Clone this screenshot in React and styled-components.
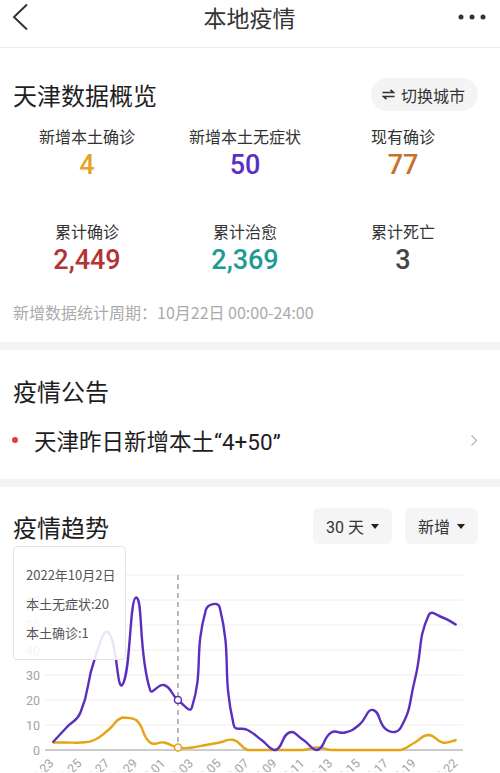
import React from "react";
import styled, { createGlobalStyle } from "styled-components";

const GlobalStyle = createGlobalStyle`
  body {
    margin: 0;
    background: #fff;
    font-family: "Noto Sans CJK SC", "Noto Sans", sans-serif;
    color: #222;
  }
`;

const asymptomatic = [3, 9, 15, 36, 47, 26, 61, 24, 26, 20, 17, 56, 57, 10, 8, 4, 0, 7, 4, 0, 7, 7, 10, 16, 8, 9, 28, 54, 53, 50];
const confirmed = [3, 3, 3, 4, 8, 13, 12, 3, 3, 1, 1, 2, 3, 4, 0, 0, 0, 0, 0, 1, 0, 0, 0, 0, 0, 0, 3, 6, 3, 4];

const stats = [
  { label: "新增本土确诊", value: "4", color: "#e2a52a" },
  { label: "新增本土无症状", value: "50", color: "#5a2fc4" },
  { label: "现有确诊", value: "77", color: "#c8702c" },
  { label: "累计确诊", value: "2,449", color: "#b43333" },
  { label: "累计治愈", value: "2,369", color: "#1d9b96" },
  { label: "累计死亡", value: "3", color: "#454545" },
];

// chart geometry
const X0 = 52.6;
const STEP = 13.93;
const BASE = 206;
const UNIT = 2.5;
const px = (i) => X0 + i * STEP;
const py = (v) => BASE - v * UNIT;

function dateLabel(i) {
  const d = new Date(2022, 8, 23 + i);
  const mm = String(d.getMonth() + 1).padStart(2, "0");
  const dd = String(d.getDate()).padStart(2, "0");
  return `${mm}-${dd}`;
}

function smoothPath(values, smooth = 0.5) {
  const pts = values.map((v, i) => [px(i), py(v)]);
  const ys = pts.map((p) => p[1]);
  const minY = Math.min(...ys);
  const maxY = Math.max(...ys);
  const clamp = (y) => Math.min(maxY, Math.max(minY, y));
  const cps = pts.map((p, i) => {
    const prev = pts[i - 1] || p;
    const next = pts[i + 1] || p;
    const vx = next[0] - prev[0];
    const vy = next[1] - prev[1];
    let d0 = Math.hypot(p[0] - prev[0], p[1] - prev[1]);
    let d1 = Math.hypot(next[0] - p[0], next[1] - p[1]);
    const sum = d0 + d1;
    if (sum) {
      d0 /= sum;
      d1 /= sum;
    }
    return {
      in: [p[0] - vx * smooth * d0, clamp(p[1] - vy * smooth * d0)],
      out: [p[0] + vx * smooth * d1, clamp(p[1] + vy * smooth * d1)],
    };
  });
  let d = `M${pts[0][0]},${pts[0][1]}`;
  for (let i = 1; i < pts.length; i++) {
    const a = cps[i - 1].out;
    const b = cps[i].in;
    d += ` C${a[0]},${a[1]} ${b[0]},${b[1]} ${pts[i][0]},${pts[i][1]}`;
  }
  return d;
}

const Page = styled.div`
  width: 500px;
  overflow: hidden;
`;

const Header = styled.header`
  height: 34px;
  display: grid;
  grid-template-columns: 1fr auto 1fr;
  align-items: center;
  padding: 0 13px 13px 12px;
  border-bottom: 1px solid #ececec;
`;

const HeaderTitle = styled.h1`
  margin: 0;
  font-size: 23px;
  font-weight: 400;
  color: #333;
`;

const HeaderSide = styled.div`
  display: flex;
  justify-content: ${(p) => (p.$end ? "flex-end" : "flex-start")};
  align-items: center;
`;

const Section = styled.section`
  padding: ${(p) => p.$pad};
  border-bottom: ${(p) => (p.$last ? "none" : "8px solid #f3f3f4")};
`;

const TitleRow = styled.div`
  display: flex;
  justify-content: space-between;
  align-items: center;
  height: ${(p) => p.$h || 33}px;
`;

const SectionTitle = styled.h2`
  margin: 0;
  font-size: 24px;
  line-height: 33px;
  font-weight: 400;
  color: #1e1e1e;
`;

const PillButton = styled.button`
  display: flex;
  align-items: center;
  gap: 6px;
  height: 33px;
  padding: 0 13px 0 11px;
  border: none;
  border-radius: 17px;
  background: #f4f4f5;
  font-family: inherit;
  font-size: 16px;
  color: #333;
`;

const StatGrid = styled.div`
  display: grid;
  grid-template-columns: repeat(3, 1fr);
  row-gap: 39px;
  margin: 14px -4px 0 -5px;
`;

const Stat = styled.div`
  display: flex;
  flex-direction: column;
  align-items: center;
  gap: 2px;
`;

const StatLabel = styled.div`
  font-size: 16px;
  line-height: 22px;
  color: #333;
`;

const StatValue = styled.div`
  font-family: Roboto, "Noto Sans", sans-serif;
  font-size: 27px;
  line-height: 32px;
  font-weight: 500;
  color: ${(p) => p.$color};
`;

const Footnote = styled.p`
  margin: 25px 0 0;
  font-size: 16px;
  line-height: 22px;
  color: #ababab;
`;

const Notice = styled.div`
  display: flex;
  align-items: center;
  height: 30px;
  margin-top: 18px;
`;

const Dot = styled.span`
  width: 6px;
  height: 6px;
  border-radius: 50%;
  background: #e23d3d;
  margin: 0 16px 0 -1px;
`;

const NoticeText = styled.span`
  flex: 1;
  font-family: Roboto, "Noto Sans CJK SC", sans-serif;
  font-size: 22.5px;
  color: #1e1e1e;
`;

const Controls = styled.div`
  display: flex;
  gap: 13px;
`;

const Select = styled.div`
  display: flex;
  align-items: center;
  gap: 7px;
  height: 36px;
  padding: 0 13px;
  border-radius: 6px;
  background: #f5f5f6;
  font-size: 16px;
  color: #333;
  font-family: Roboto, "Noto Sans CJK SC", sans-serif;
`;

const Caret = styled.span`
  width: 0;
  height: 0;
  border-left: 4.5px solid transparent;
  border-right: 4.5px solid transparent;
  border-top: 5px solid #222;
`;

const ChartBox = styled.div`
  position: relative;
  height: 228px;
  margin: 0 -22px 0 -13px;
`;

const Tooltip = styled.div`
  position: absolute;
  top: 2px;
  left: 13px;
  box-sizing: border-box;
  width: 113px;
  padding: 13px 0 12px 12px;
  border: 1px solid #e4e4e4;
  border-radius: 4px;
  background: rgba(255, 255, 255, 0.88);
  font-size: 13px;
  line-height: 29px;
  color: #555;
`;

const BackIcon = () => (
  <svg width="18" height="28" viewBox="0 0 18 28">
    <polyline points="15,1.5 2,14 15,26.5" fill="none" stroke="#333" strokeWidth="2" />
  </svg>
);

const MoreIcon = () => (
  <svg width="30" height="8" viewBox="0 0 30 8">
    <circle cx="4" cy="4" r="2.5" fill="#333" />
    <circle cx="15" cy="4" r="2.5" fill="#333" />
    <circle cx="26" cy="4" r="2.5" fill="#333" />
  </svg>
);

const SwapIcon = () => (
  <svg width="13" height="11" viewBox="0 0 13 11">
    <path d="M0.5 3.5H11.5L8.5 0.8" fill="none" stroke="#333" strokeWidth="1.7" />
    <path d="M12.5 7.5H1.5L4.5 10.2" fill="none" stroke="#333" strokeWidth="1.7" />
  </svg>
);

const ChevronRight = () => (
  <svg width="8" height="13" viewBox="0 0 8 13">
    <polyline points="1.5,1.5 6.5,6.5 1.5,11.5" fill="none" stroke="#b5b5b5" strokeWidth="1.3" />
  </svg>
);

const Chart = () => {
  const ticks = [0, 10, 20, 30, 40, 50, 60, 70];
  const labels = [0, 2, 4, 6, 8, 10, 12, 14, 16, 18, 20, 22, 24, 26, 29];
  return (
    <svg width="500" height="228" viewBox="0 0 500 228">
      {ticks.map((t) => (
        <g key={t}>
          <line
            x1="45"
            x2="463"
            y1={py(t)}
            y2={py(t)}
            stroke={t === 0 ? "#9a9a9a" : "#eeeeee"}
            strokeWidth="1"
          />
          <text x="40" y={py(t) + 4.5} textAnchor="end" fontSize="12.5" fill="#a3a3a3" fontFamily="Roboto, sans-serif">
            {t}
          </text>
        </g>
      ))}
      <line x1={px(9)} x2={px(9)} y1={py(70)} y2={BASE} stroke="#8a8a8a" strokeDasharray="5 4" strokeWidth="1.2" />
      <path d={smoothPath(confirmed)} fill="none" stroke="#e5a416" strokeWidth="2.4" />
      <path d={smoothPath(asymptomatic)} fill="none" stroke="#5a2fbf" strokeWidth="2.4" />
      <circle cx={px(9)} cy={py(20)} r="3.5" fill="#fff" stroke="#5a2fbf" strokeWidth="1.5" />
      <circle cx={px(9)} cy={py(1)} r="3.5" fill="#fff" stroke="#e5a416" strokeWidth="1.5" />
      {labels.map((i) => (
        <text
          key={i}
          x={px(i) + 2}
          y={BASE + 14}
          textAnchor="end"
          fontSize="12.5"
          fill="#a3a3a3"
          fontFamily="Roboto, sans-serif"
          transform={`rotate(-45 ${px(i) + 2} ${BASE + 14})`}
        >
          {dateLabel(i)}
        </text>
      ))}
    </svg>
  );
};

export default function App() {
  return (
    <Page>
      <GlobalStyle />
      <Header>
        <HeaderSide>
          <BackIcon />
        </HeaderSide>
        <HeaderTitle>本地疫情</HeaderTitle>
        <HeaderSide $end>
          <MoreIcon />
        </HeaderSide>
      </Header>

      <Section $pad="30px 22px 19px 13px">
        <TitleRow>
          <SectionTitle>天津数据概览</SectionTitle>
          <PillButton>
            <SwapIcon />
            切换城市
          </PillButton>
        </TitleRow>
        <StatGrid>
          {stats.map((s) => (
            <Stat key={s.label}>
              <StatLabel>{s.label}</StatLabel>
              <StatValue $color={s.color}>{s.value}</StatValue>
            </Stat>
          ))}
        </StatGrid>
        <Footnote>新增数据统计周期：10月22日 00:00-24:00</Footnote>
      </Section>

      <Section $pad="24px 22px 24px 13px">
        <SectionTitle>疫情公告</SectionTitle>
        <Notice>
          <Dot />
          <NoticeText>天津昨日新增本土“4+50”</NoticeText>
          <ChevronRight />
        </Notice>
      </Section>

      <Section $pad="21px 22px 0 13px" $last>
        <TitleRow $h={36}>
          <SectionTitle>疫情趋势</SectionTitle>
          <Controls>
            <Select>
              30 天 <Caret />
            </Select>
            <Select>
              新增 <Caret />
            </Select>
          </Controls>
        </TitleRow>
        <ChartBox>
          <Chart />
          <Tooltip>
            <div>2022年10月2日</div>
            <div>本土无症状:20</div>
            <div>本土确诊:1</div>
          </Tooltip>
        </ChartBox>
      </Section>
    </Page>
  );
}
